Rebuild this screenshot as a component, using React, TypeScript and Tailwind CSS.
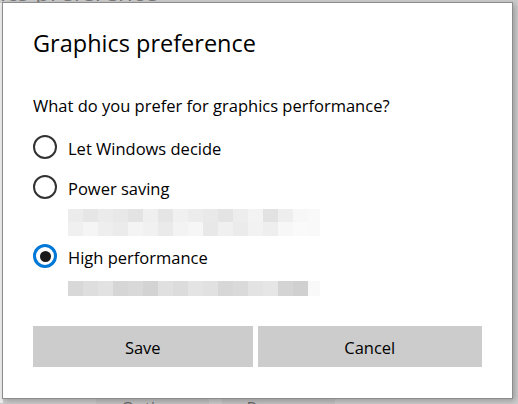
import React from 'react';

const font = { fontFamily: '"Open Sans", "Noto Sans", "Liberation Sans", sans-serif' };

const barTop = [
  'bg-[#ececec]', 'bg-[#e6e6e6]', 'bg-[#ebebeb]', 'bg-[#e8e8e8]', 'bg-[#e3e3e3]', 'bg-[#efefef]',
  'bg-[#e5e5e5]', 'bg-[#f0f0f0]', 'bg-[#ececec]', 'bg-[#e9e9e9]', 'bg-[#e4e4e4]', 'bg-[#ededed]',
  'bg-[#f3f3f3]', 'bg-[#e2e2e2]', 'bg-[#eeeeee]', 'bg-[#f7f7f7]',
];
const barMid = [
  'bg-[#f0f0f0]', 'bg-[#f5f5f5]', 'bg-[#eeeeee]', 'bg-[#ebebeb]', 'bg-[#f4f4f4]', 'bg-[#f1f1f1]',
  'bg-[#eaeaea]', 'bg-[#f3f3f3]', 'bg-[#f6f6f6]', 'bg-[#e8e8e8]', 'bg-[#f0f0f0]', 'bg-[#ebebeb]',
  'bg-[#f2f2f2]', 'bg-[#eeeeee]', 'bg-[#f7f7f7]', 'bg-[#fafafa]',
];
const barLow = [
  'bg-[#d8d8d8]', 'bg-[#dedede]', 'bg-[#e2e2e2]', 'bg-[#d6d6d6]', 'bg-[#d9d9d9]', 'bg-[#d3d3d3]',
  'bg-[#e0e0e0]', 'bg-[#dcdcdc]', 'bg-[#e4e4e4]', 'bg-[#e1e1e1]', 'bg-[#d7d7d7]', 'bg-[#dadada]',
  'bg-[#e3e3e3]', 'bg-[#e6e6e6]', 'bg-[#d4d4d4]', 'bg-[#d0d0d0]',
];

function BlurRow({ cells, h }: { cells: string[]; h: string }) {
  return (
    <div className={`flex ${h}`}>
      {cells.map((c, i) => (
        <div key={i} className={`w-[15px] ${c}`} />
      ))}
      <div className="w-[12px] bg-[#f9f9f9]" />
    </div>
  );
}

function Radio({ label, checked }: { label: string; checked?: boolean }) {
  return (
    <div className="flex h-[40px] items-center gap-[11px]">
      {checked ? (
        <div className="flex h-[24px] w-[24px] items-center justify-center rounded-full border-[3px] border-[#0078d7]">
          <div className="h-[11px] w-[11px] rounded-full bg-[#1a1a1a]" />
        </div>
      ) : (
        <div className="h-[24px] w-[24px] rounded-full border-[2px] border-[#333333]" />
      )}
      <span className="pt-[3px] text-[16.5px] leading-[24px] text-black">{label}</span>
    </div>
  );
}

export default function App() {
  return (
    <div className="relative h-[404px] w-[518px] overflow-hidden bg-[#cdcdcd]" style={font}>
      {/* window underneath */}
      <div className="absolute left-[-70px] top-[-26px] text-[24px] text-[#7a7a7a]">Graphics preference</div>
      <div className="absolute left-0 top-[3px] h-[400px] w-[3px] bg-[#efefef]" />
      <div className="absolute left-[96px] top-[399px] flex gap-[13px]">
        <div className="flex h-[30px] w-[113px] justify-center bg-[#c4c4c4] pt-[3px] text-[17px] leading-[12px] text-[#6a6a6a]">
          Options
        </div>
        <div className="flex h-[30px] w-[113px] justify-center bg-[#c4c4c4] pt-[3px] text-[17px] leading-[12px] text-[#6a6a6a]">
          Remove
        </div>
      </div>

      {/* dialog */}
      <div className="absolute left-[2px] top-[2px] flex h-[397px] w-[511px] flex-col border border-[#8c8c8c] bg-white px-[30px] pt-[24px] shadow-[2px_2px_6px_rgba(0,0,0,0.25)]">
        <h1 className="text-[23.5px] leading-[32px] font-normal text-black">Graphics preference</h1>
        <p className="mt-[35px] text-[16.5px] leading-[24px] text-black">What do you prefer for graphics performance?</p>
        <div className="mt-[9px] flex flex-col">
          <Radio label="Let Windows decide" />
          <Radio label="Power saving" />
          <div className="ml-[35px] mt-[2px] flex flex-col">
            <BlurRow cells={barTop} h="h-[13px]" />
            <BlurRow cells={barMid} h="h-[14px]" />
          </div>
          <Radio label="High performance" checked />
          <div className="ml-[35px] mt-[5px]">
            <BlurRow cells={barLow} h="h-[15px]" />
          </div>
        </div>
        <div className="mt-[30px] flex gap-[5px]">
          <button className="h-[41px] w-[220px] bg-[#cccccc] pt-[4px] text-[16.5px] text-black">Save</button>
          <button className="h-[41px] w-[225px] bg-[#cccccc] pt-[4px] text-[16.5px] text-black">Cancel</button>
        </div>
      </div>
    </div>
  );
}
